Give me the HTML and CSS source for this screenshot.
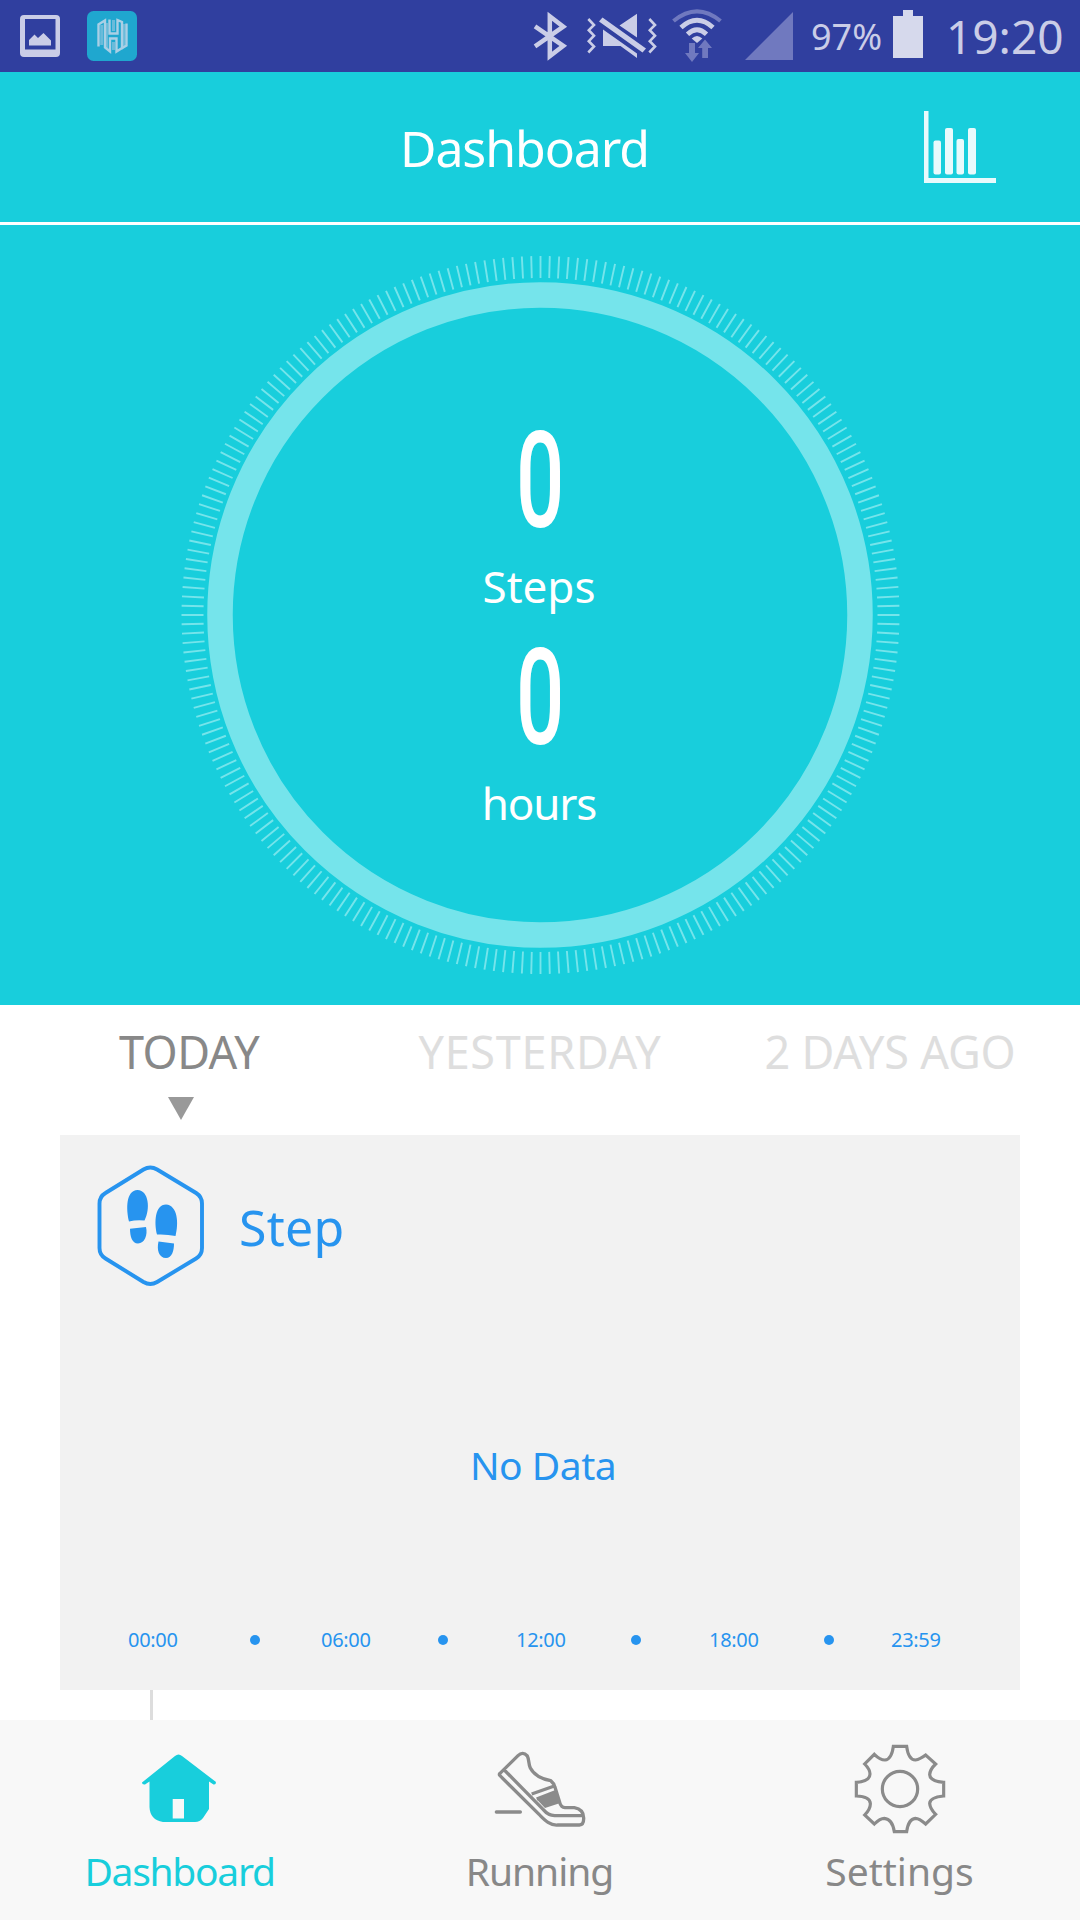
FILE: index.html
```html
<!DOCTYPE html>
<html lang="en">
<head>
<meta charset="utf-8">
<title>Dashboard</title>
<link rel="stylesheet" href="styles.css">
</head>
<body>
<div class="screen">
  <div class="status">
    <svg class="st-image" width="40" height="42" viewBox="20 14 40 42"><path fill="#cacde7" fill-rule="evenodd" d="M24 14h32a4 4 0 0 1 4 4v34a4 4 0 0 1-4 4H24a4 4 0 0 1-4-4V18a4 4 0 0 1 4-4zM25 18v30.500h30.500V18z"/><path fill="#cacde7" d="M29 44.500V39l5.500-5.500L38 37l5.500-5L51 39.500v5z"/></svg>
    <svg class="st-app" width="50" height="50" viewBox="87 10 50 50"><rect x="87" y="10" width="50" height="50" rx="6.500" fill="#1fa7cf"/><path stroke="#6abbda" stroke-width="3" d="M101.700 24v20M106.500 22v25M113.500 41v8M113.500 19v11M124 23v22"/><g fill="none" stroke="#a9cfe5" stroke-width="2.400"><path d="M98.500 45.500V23.500l6.500-4V46.500l5 4V37.500h6.500v13l5.500-3.500V21L117.500 19v13.500h-8V18.500"/><path d="M121.500 47.500l5-3V22.500"/></g></svg>
    <span class="spacer"></span>
    <svg width="36" height="50" viewBox="532 10 36 50"><path fill="none" stroke="#cacde7" stroke-width="4.500" d="M535 25.300l28.300 19.500-13.500 10.400V15.300l13.500 10.400L535 45.300"/></svg>
    <svg class="st-mute" width="72" height="50" viewBox="586 10 72 50"><path fill="none" stroke="#cacde7" stroke-width="2.600" d="M588.300 18l5.700 6-5.200 5.200 5.200 5.500-5.200 5.500 5.200 5.300-5.700 6M649.300 18l5.700 6-5.200 5.200 5.200 5.500-5.200 5.500 5.200 5.300-5.700 6"/><path fill="#cacde7" d="M602.500 16.500L646 47.500l-3.500 4L599 20.500zM637 12.700v23.800l-17.500-12zM603 28.500V45h17.500L637 57v-4.500z"/></svg>
    <svg class="st-wifi" width="52" height="56" viewBox="671 7 52 56"><path fill="none" stroke="#7079bf" stroke-width="4.200" d="M673.500 20Q697 .700 720.500 20"/><path fill="none" stroke="#cacde7" stroke-width="4.800" d="M681 26.500q16-14.400 32 0M687.500 33.200q9.500-9 19 0"/><path fill="#cacde7" d="M691.700 37.500q5.300-5 10.600 0L697 42z"/><path fill="#7079bf" d="M689 42h6v10h4l-7 9-7-9h4zM702.200 57V47H698l7-8.500 7 8.500h-4v10z"/></svg>
    <svg class="st-signal" width="48" height="48" viewBox="0 0 48 48"><path fill="#7079bf" d="M0 48L48 0v48z"/></svg>
    <span class="percent">97%</span>
    <svg class="st-battery" width="30" height="48" viewBox="0 0 30 48"><path fill="#d6d9ec" d="M10 0h10v6h10v42H0V6h10z"/></svg>
    <span class="clock">19:20</span>
  </div>

  <header class="header">
    <h1 class="title">Dashboard</h1>
    <svg class="chart" width="72" height="72" viewBox="0 0 72 72"><path fill="#e9fafc" d="M0 0h4.500v67H72v5H0z"/><g fill="#e9fafc"><rect x="9.500" y="29.500" width="7.500" height="34" rx="2"/><rect x="21" y="17" width="8" height="46.500" rx="2"/><rect x="32.500" y="28" width="7.500" height="35.500" rx="2"/><rect x="44" y="17" width="8" height="46.500" rx="2"/></g></svg>
  </header>

  <section class="hero">
    <svg class="dial" width="720" height="720" viewBox="-360 -360 720 720" fill="none" stroke="#75e4eb">
      <circle cx="0.500" r="348" stroke-width="22" pathLength="240" stroke-dasharray="0.21 0.79" stroke-dashoffset="0.105"/>
      <circle r="320" stroke-width="25.500"/>
    </svg>
    <div class="metrics">
      <div class="metric"><span class="value">0</span><span class="unit">Steps</span></div>
      <div class="metric"><span class="value">0</span><span class="unit hours">hours</span></div>
    </div>
  </section>

  <div class="tabs">
    <div class="tab active">TODAY</div>
    <div class="tab yesterday">YESTERDAY</div>
    <div class="tab ago">2 DAYS AGO</div>
  </div>
  <div class="marker"><svg width="26" height="23" viewBox="0 0 26 23"><path fill="#999" d="M0 0h26L13 23z"/></svg></div>

  <section class="card">
    <div class="card-head">
      <svg width="108" height="122" viewBox="96 1165 108 122"><path fill="none" stroke="#2794ef" stroke-width="3.900" d="M143.500 1169.500q6.800-4 13.600 0l39 23.500q5.900 3.800 5.900 10.500V1248q0 7-5.900 10.500l-39 23.500q-6.800 4-13.600 0l-38-23.500q-6-3.500-6-10.500V1203.500q0-7 6-10.500z"/><g fill="#2794ef"><path d="M129 1221.500c-3-13-3-31 8.500-31.500 11.500.500 13 19 7 30.500q-8-1-15.500 1zM130 1228.800l16-1.800c2 8-1.500 16.500-8 16.500-6 0-8-7-8-14.700z"/><path d="M157 1234.500c-3-12-2-30 9-30 11.500 1 13 18 9.500 31.500q-9-2-18.500-1.500zM158.500 1241.500l15.500 2c0 7-2 14.500-8 14.500-7 0-9.500-8-7.500-16.500z"/></g></svg>
      <h2 class="card-title">Step</h2>
    </div>
    <div class="empty">No Data</div>
    <div class="axis">
      <span>00:00</span><i class="dot"></i><span>06:00</span><i class="dot"></i><span>12:00</span><i class="dot"></i><span>18:00</span><i class="dot"></i><span>23:59</span>
    </div>
  </section>
  <div class="connector"></div>

  <nav class="nav">
    <div class="item on">
      <svg class="home" width="76" height="92" viewBox="141 1741 76 92"><path fill="#18cedc" fill-rule="evenodd" d="M175 1755q3.500-3 7 0l34 26q0 3-2.500 2.500L209 1780.500V1808L203 1817q-3 4-8 4h-32q-13-2-13.500-15v-25.500l-4.500 3q-3 .500-3-2zM172.700 1798v19.500H184V1798z"/></svg>
      <span class="label">Dashboard</span>
    </div>
    <div class="item">
      <svg width="92" height="92" viewBox="102 66 276 276" fill="none" stroke="#8b8b8b" stroke-width="10" stroke-linejoin="round"><path d="M120 160L174 107Q188 93 202 108C208 120 205 132 211 144C222 165 245 177 272 182Q282 190 285 202L299 247Q303 262 315 263H343Q372 268 371 296Q371 314 358 315H294C270 318 252 298 238 284L120 167Q116 163 120 160zM133 150L250 269Q264 286 284 287H370M215 222L283 198M230 237L288 215"/><path fill="#8b8b8b" stroke="none" d="M230 238l57-22 14 33-46 15z"/><path stroke-linecap="round" d="M109 276h72"/></svg>
      <span class="label run">Running</span>
    </div>
    <div class="item">
      <svg width="92" height="92" viewBox="162 66 276 276" fill="none" stroke="#8b8b8b" stroke-width="9.500"><path d="M280 79H320Q325 119 346 120Q360 118 377 105L407 132Q390 148 389 164Q390 184 431 187V228Q390 232 389 250Q390 266 407 283L377 312Q358 295 346 295Q325 297 320 335H283Q277 297 253 295Q240 295 223 312L194 285Q212 266 211 250Q210 230 169 228V187Q210 184 210 162Q210 148 194 132L223 103Q240 120 255 120Q275 118 280 79z"/><circle cx="300" cy="207" r="53"/></svg>
      <span class="label set">Settings</span>
    </div>
  </nav>
</div>
</body>
</html>
```
FILE: styles.css
```css
* { box-sizing: border-box; }
body { margin: 0; background: #fff; font-family: "Noto Sans", sans-serif; }
h1, h2 { margin: 0; font-weight: 400; }
svg { display: block; flex: none; }
.screen { width: 1080px; height: 1920px; overflow: hidden; display: flex; flex-direction: column; }

.status { height: 72px; flex: none; background: #303f9f; color: #cacde7; display: flex; align-items: center; padding: 0 15px 0 20px; }
.st-app { margin-left: 27px; }
.spacer { flex: 1; }
.st-mute { margin-left: 18px; }
.st-wifi { margin-left: 13px; }
.st-signal { margin-left: 22px; }
.percent { width: 100px; padding: 2px 0 0 18px; font-size: 36px; line-height: 70px; }
.st-battery { margin-bottom: 4px; }
.clock { width: 142px; padding: 1px 0 0 23px; font-size: 46px; line-height: 71px; }

.header { height: 153px; flex: none; background: #18cedc; border-bottom: 3px solid #fff; color: #fff; display: grid; grid-template-columns: 924px 1fr; align-items: center; }
.title { font-size: 50px; line-height: 148px; letter-spacing: -1.1px; padding: 2px 0 0 400px; }

.hero { height: 780px; flex: none; background: #18cedc; display: grid; justify-items: center; }
.dial, .metrics { grid-area: 1 / 1; }
.dial { margin-top: 30px; }
.metrics { padding-top: 179px; display: flex; flex-direction: column; gap: 5px; color: #fff; }
.metric { display: flex; flex-direction: column; align-items: center; height: 212px; }
.value { height: 150px; line-height: 156px; font-family: Roboto, sans-serif; font-weight: 500; font-size: 134px; transform: scaleX(.635); }
.unit { font-size: 44px; line-height: 64px; padding-right: 2px; }
.hours { letter-spacing: -1.2px; }

.tabs { height: 91px; flex: none; padding: 0 15px; display: grid; grid-template-columns: repeat(3, 1fr); text-align: center; font-size: 45px; line-height: 93px; color: #dedede; letter-spacing: -.2px; white-space: nowrap; }
.active { color: #888; letter-spacing: -.5px; padding-right: 2px; }
.yesterday { letter-spacing: .7px; }
.marker { height: 39px; flex: none; padding-left: 168px; padding-top: 1px; }

.card { height: 555px; flex: none; margin: 0 60px; background: #f2f2f2; color: #2794ef; display: flex; flex-direction: column; }
.card-head { display: flex; align-items: center; gap: 35px; padding: 30px 0 0 36px; height: 152px; }
.card-title { font-size: 50px; line-height: 122px; letter-spacing: .3px; padding-top: 2px; }
.empty { text-align: center; font-size: 39px; line-height: 60px; margin-top: 148px; padding-left: 6px; letter-spacing: -.5px; }
.axis { margin-top: 130px; height: 30px; line-height: 30px; font-size: 20px; letter-spacing: -.3px; display: grid; grid-template-columns: 122px 71px 117px 78px 115px 78px 115px 67px 50px; margin-left: 68px; align-items: center; }
.dot { width: 10px; height: 10px; border-radius: 50%; background: #2794ef; }
.connector { height: 30px; flex: none; margin-left: 150px; width: 3px; background: #ddd; }

.nav { height: 200px; flex: none; background: #f8f8f8; display: grid; grid-template-columns: repeat(3, 1fr); color: #888; }
.item { display: flex; flex-direction: column; align-items: center; padding-top: 22px; }
.on { color: #18cedc; }
.home { margin-right: 2px; }
.label { font-size: 39px; line-height: 70px; margin-top: 2px; padding-right: 1px; letter-spacing: -1.3px; }
.run { letter-spacing: -1px; }
.set { letter-spacing: 0; }
```
